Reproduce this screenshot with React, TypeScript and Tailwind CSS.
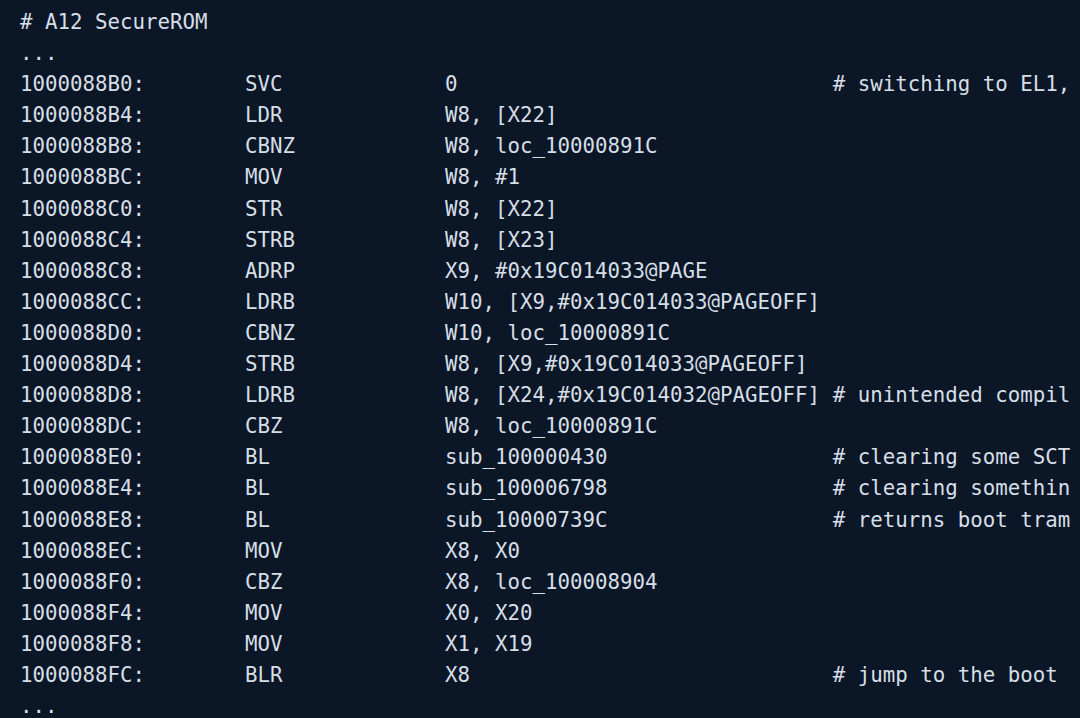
import React from 'react';

type Row = [string, string, string, string?];

const rows: Row[] = [
  ['1000088B0:', 'SVC', '0', '# switching to EL1,'],
  ['1000088B4:', 'LDR', 'W8, [X22]'],
  ['1000088B8:', 'CBNZ', 'W8, loc_10000891C'],
  ['1000088BC:', 'MOV', 'W8, #1'],
  ['1000088C0:', 'STR', 'W8, [X22]'],
  ['1000088C4:', 'STRB', 'W8, [X23]'],
  ['1000088C8:', 'ADRP', 'X9, #0x19C014033@PAGE'],
  ['1000088CC:', 'LDRB', 'W10, [X9,#0x19C014033@PAGEOFF]'],
  ['1000088D0:', 'CBNZ', 'W10, loc_10000891C'],
  ['1000088D4:', 'STRB', 'W8, [X9,#0x19C014033@PAGEOFF]'],
  ['1000088D8:', 'LDRB', 'W8, [X24,#0x19C014032@PAGEOFF]', '# unintended compil'],
  ['1000088DC:', 'CBZ', 'W8, loc_10000891C'],
  ['1000088E0:', 'BL', 'sub_100000430', '# clearing some SCT'],
  ['1000088E4:', 'BL', 'sub_100006798', '# clearing somethin'],
  ['1000088E8:', 'BL', 'sub_10000739C', '# returns boot tram'],
  ['1000088EC:', 'MOV', 'X8, X0'],
  ['1000088F0:', 'CBZ', 'X8, loc_100008904'],
  ['1000088F4:', 'MOV', 'X0, X20'],
  ['1000088F8:', 'MOV', 'X1, X19'],
  ['1000088FC:', 'BLR', 'X8', '# jump to the boot'],
];

function formatRow([addr, op, args, comment]: Row) {
  const base = addr.padEnd(18) + op.padEnd(16);
  if (!comment) return base + args;
  return base + args.padEnd(31) + comment;
}

export default function App() {
  const lines = ['# A12 SecureROM', '...', ...rows.map(formatRow), '...'];

  return (
    <div className="w-[1080px] h-[718px] overflow-hidden bg-[#0b1727]">
      <pre
        className="pl-[20px] pt-[7px] m-0 text-[20.77px] leading-[31.1px] text-[#d6dee6] whitespace-pre"
        style={{ fontFamily: '"DejaVu Sans Mono", "Liberation Mono", monospace' }}
      >
        {lines.map((l, i) => (
          <div key={i}>{l}</div>
        ))}
      </pre>
    </div>
  );
}
